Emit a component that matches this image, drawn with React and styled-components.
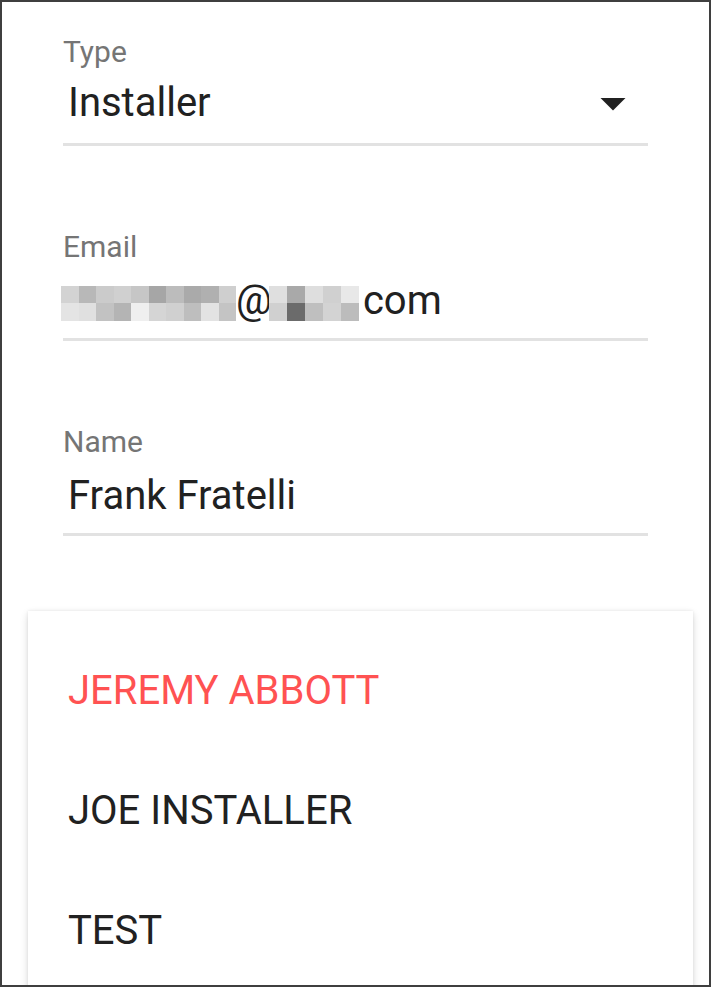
import styled, { createGlobalStyle } from "styled-components";

const GlobalStyle = createGlobalStyle`
  html, body {
    margin: 0;
    padding: 0;
    background: #ffffff;
  }
  body {
    font-family: Roboto, "Noto Sans", "Liberation Sans", sans-serif;
  }
`;

// mosaic colours for the hidden part of the email
const localPart = [
  ["#d3d3d3", "#b8b8b8", "#cbcbcb", "#d0d0d0", "#c6c6c6", "#a6a6a6", "#bcbcbc", "#aaaaaa", "#b0b0b0", "#cfcfcf"],
  ["#e4e4e4", "#e0e0e0", "#c2c2c2", "#b4b4b4", "#efefef", "#d5d5d5", "#d0d0d0", "#bebebe", "#e3e3e3", "#c4c4c4"],
];
const domainPart = [
  ["#dfdfdf", "#a9a9a9", "#dedede", "#d0d0d0", "#e8e8e8"],
  ["#d0d0d0", "#6b6b6b", "#bfbfbf", "#d3d3d3", "#bcbcbc"],
];

const users = [
  { name: "JEREMY ABBOTT", active: true },
  { name: "JOE INSTALLER" },
  { name: "TEST" },
];

function Mosaic({ rows, cell, offset = 0 }) {
  return (
    <MosaicGrid $cols={rows[0].length} $cell={cell} $offset={offset}>
      {rows.flat().map((c, i) => (
        <MosaicCell key={i} $color={c} />
      ))}
    </MosaicGrid>
  );
}

function DropArrow() {
  return (
    <ArrowIcon viewBox="0 0 24 24" width="60" height="60">
      <path d="M7 10l5 5 5-5z" fill="#212121" />
    </ArrowIcon>
  );
}

export default function App() {
  return (
    <>
      <GlobalStyle />
      <Frame>
        <Form>
          {/* Type */}
          <Field>
            <Label>Type</Label>
            <ValueRow $select>
              <Value>Installer</Value>
              <DropArrow />
            </ValueRow>
          </Field>

          {/* Email */}
          <Field>
            <Label>Email</Label>
            <ValueRow>
              <Value>
                <Mosaic rows={localPart} cell={17.5} offset={-7} />
                <At>@</At>
                <Mosaic rows={domainPart} cell={18} />
                <Domain>com</Domain>
              </Value>
            </ValueRow>
          </Field>

          {/* Name */}
          <Field>
            <Label>Name</Label>
            <ValueRow>
              <Value>Frank Fratelli</Value>
            </ValueRow>
          </Field>
        </Form>

        <Menu>
          {users.map((u) => (
            <MenuItem key={u.name} $active={u.active}>
              {u.name}
            </MenuItem>
          ))}
        </Menu>
      </Frame>
    </>
  );
}

// CSS
const Frame = styled.div`
  box-sizing: border-box;
  width: 711px;
  height: 987px;
  border: 2px solid #3f3f3f;
  overflow: hidden;
  background: #ffffff;
`;

const Form = styled.div`
  display: flex;
  flex-direction: column;
  gap: 83px;
  padding: 32px 0 0 61px;
  width: 585px;
`;

const Field = styled.div`
  display: flex;
  flex-direction: column;
`;

const Label = styled.div`
  height: 36px;
  font-size: 30px;
  line-height: 36px;
  color: #757575;
`;

const ValueRow = styled.div`
  display: flex;
  align-items: center;
  justify-content: space-between;
  position: relative;
  margin-top: ${(p) => (p.$select ? "9px" : "12px")};
  padding-bottom: ${(p) => (p.$select ? "16px" : "13px")};
  border-bottom: 3px solid #e2e2e2;
`;

const Value = styled.div`
  display: flex;
  align-items: center;
  height: 48px;
  padding-left: 5px;
  font-size: 40px;
  line-height: 48px;
  color: #212121;
`;

const ArrowIcon = styled.svg`
  position: absolute;
  right: 5px;
  top: -6px;
`;

const MosaicGrid = styled.div`
  display: grid;
  grid-template-columns: repeat(${(p) => p.$cols}, ${(p) => p.$cell}px);
  grid-auto-rows: 17.5px;
  margin-top: 4px;
  margin-left: ${(p) => p.$offset}px;
`;

const MosaicCell = styled.div`
  background: ${(p) => p.$color};
`;

const At = styled.span`
  margin-right: -3px;
`;

const Domain = styled.span`
  margin-left: 4px;
`;

const Menu = styled.div`
  margin: 75px 0 0 26px;
  width: 665px;
  padding-top: 20px;
  background: #ffffff;
  box-shadow: 0 3px 8px rgba(0, 0, 0, 0.14), 0 0 3px rgba(0, 0, 0, 0.08);
`;

const MenuItem = styled.div`
  height: 120px;
  padding-left: 40px;
  font-size: 40px;
  line-height: 120px;
  color: ${(p) => (p.$active ? "#ff5252" : "#212121")};
`;
